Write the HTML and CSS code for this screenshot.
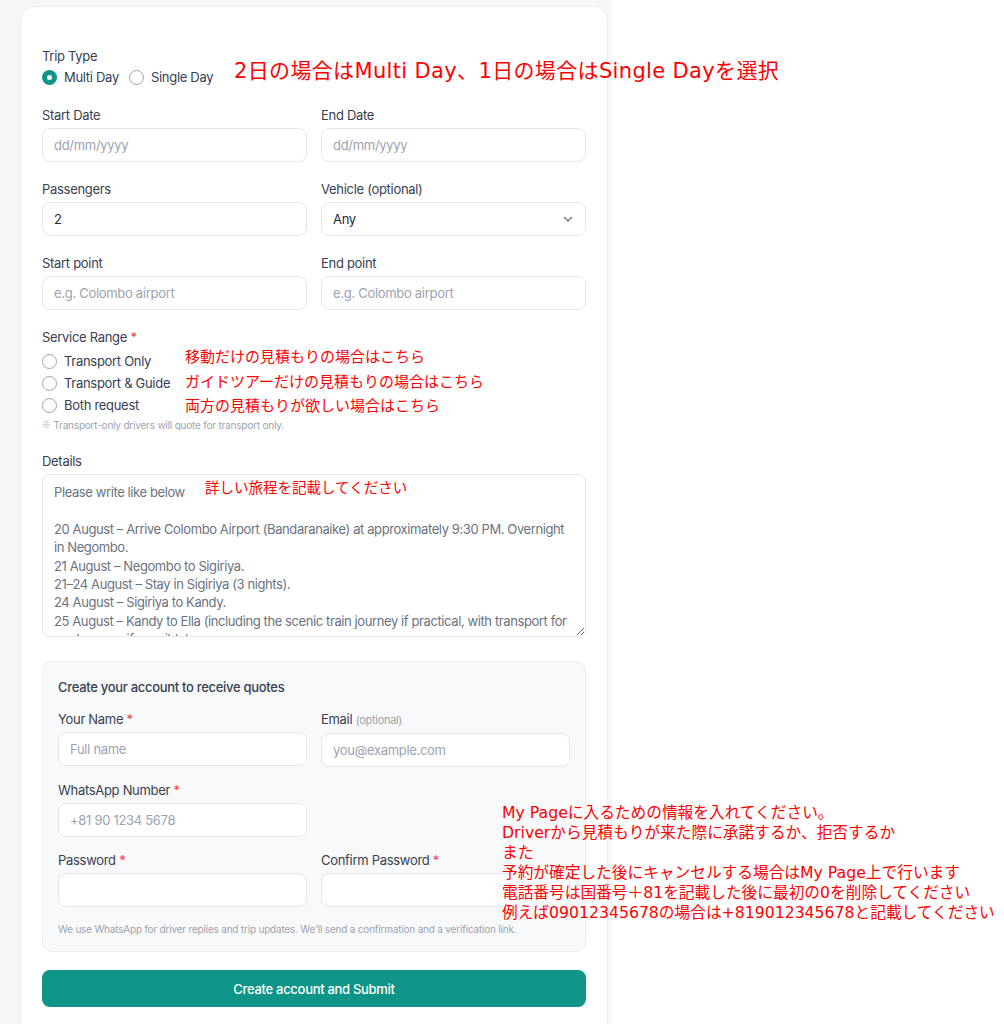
FILE: index.html
```html
<!DOCTYPE html>
<html lang="ja">
<head>
<meta charset="utf-8">
<title>Trip request</title>
<link rel="stylesheet" href="styles.css">
</head>
<body>
<div class="root">
  <div class="page">
    <form class="card">
      <div class="field">
        <div class="label flush">Trip Type</div>
        <div class="radio-inline">
          <label class="radio"><span class="dot checked"></span>Multi Day</label>
          <label class="radio"><span class="dot"></span>Single Day</label>
        </div>
      </div>

      <div class="grid2">
        <div class="field">
          <div class="label">Start Date</div>
          <div class="input placeholder">dd/mm/yyyy</div>
        </div>
        <div class="field">
          <div class="label">End Date</div>
          <div class="input placeholder">dd/mm/yyyy</div>
        </div>
      </div>

      <div class="grid2">
        <div class="field">
          <div class="label">Passengers</div>
          <div class="input">2</div>
        </div>
        <div class="field">
          <div class="label">Vehicle (optional)</div>
          <div class="input select">
            <span>Any</span>
            <svg class="chev" width="12" height="12" viewBox="0 0 12 12"><path d="M2.5 4.5 6 8l3.5-3.5" fill="none" stroke="#6b7280" stroke-width="1.3" stroke-linecap="round" stroke-linejoin="round"/></svg>
          </div>
        </div>
      </div>

      <div class="grid2">
        <div class="field">
          <div class="label">Start point</div>
          <div class="input placeholder">e.g. Colombo airport</div>
        </div>
        <div class="field">
          <div class="label">End point</div>
          <div class="input placeholder">e.g. Colombo airport</div>
        </div>
      </div>

      <div class="field">
        <div class="label flush">Service Range <span class="req">*</span></div>
        <div class="radio-stack">
          <label class="radio"><span class="dot"></span>Transport Only</label>
          <label class="radio"><span class="dot"></span>Transport &amp; Guide</label>
          <label class="radio"><span class="dot"></span>Both request</label>
        </div>
        <div class="hint"><span class="kome">※</span> Transport-only drivers will quote for transport only.</div>
      </div>

      <div class="field details">
        <div class="label">Details</div>
        <textarea class="textarea" placeholder="Please write like below&#10;&#10;20 August – Arrive Colombo Airport (Bandaranaike) at approximately 9:30 PM. Overnight in Negombo.&#10;21 August – Negombo to Sigiriya.&#10;21–24 August – Stay in Sigiriya (3 nights).&#10;24 August – Sigiriya to Kandy.&#10;25 August – Kandy to Ella (including the scenic train journey if practical, with transport for our luggage if possible).&#10;26 August – Ella to Yala.&#10;27 August – Yala safari, then to Galle."></textarea>
      </div>

      <div class="account">
        <div class="account-title">Create your account to receive quotes</div>
        <div class="grid2 tight">
          <div class="field">
            <div class="label">Your Name <span class="req">*</span></div>
            <div class="input placeholder">Full name</div>
          </div>
          <div class="field">
            <div class="label">Email <span class="opt">(optional)</span></div>
            <div class="input placeholder">you@example.com</div>
          </div>
        </div>
        <div class="grid2 tight">
          <div class="field">
            <div class="label">WhatsApp Number <span class="req">*</span></div>
            <div class="input placeholder">+81 90 1234 5678</div>
          </div>
        </div>
        <div class="grid2 tight">
          <div class="field">
            <div class="label">Password <span class="req">*</span></div>
            <div class="input"></div>
          </div>
          <div class="field">
            <div class="label">Confirm Password <span class="req">*</span></div>
            <div class="input"></div>
          </div>
        </div>
        <div class="hint">We use WhatsApp for driver replies and trip updates. We'll send a confirmation and a verification link.</div>
      </div>

      <button type="button" class="submit">Create account and Submit</button>
    </form>
  </div>

  <div class="note note-top">2日の場合はMulti Day、1日の場合はSingle Dayを選択</div>
  <div class="note note-svc">移動だけの見積もりの場合はこちら<br>ガイドツアーだけの見積もりの場合はこちら<br>両方の見積もりが欲しい場合はこちら</div>
  <div class="note note-details">詳しい旅程を記載してください</div>
  <div class="note note-account">My Pageに入るための情報を入れてください。<br>Driverから見積もりが来た際に承諾するか、拒否するか<br>また<br>予約が確定した後にキャンセルする場合はMy Page上で行います<br>電話番号は国番号＋81を記載した後に最初の0を削除してください<br>例えば09012345678の場合は+819012345678と記載してください</div>
</div>
</body>
</html>
```

FILE: styles.css
```css
* { box-sizing: border-box; }

html, body {
  margin: 0;
  padding: 0;
  background: #ffffff;
}

body {
  font-family: Inter, "Noto Sans CJK JP", sans-serif;
  font-size: 13px;
  letter-spacing: -0.3px;
  color: #374151;
}

.root {
  position: relative;
  width: 1004px;
  height: 1024px;
  overflow: hidden;
}

.page {
  width: 612px;
  min-height: 1024px;
  background: #f5f6f8;
  padding: 6px 4px 0 20px;
}

.card {
  background: #ffffff;
  border: 1px solid #eceef1;
  border-radius: 14px;
  padding: 40px 21px 24px;
  display: flex;
  flex-direction: column;
  gap: 18px;
  min-height: 1040px;
}

.grid2 {
  display: grid;
  grid-template-columns: 1fr 1fr;
  column-gap: 14px;
}

.field {
  display: flex;
  flex-direction: column;
}

.label {
  font-size: 13px;
  line-height: 18px;
  font-weight: 400;
  color: #374151;
  margin-bottom: 4px;
}

.label.flush { margin-bottom: 0; }

.req { color: #ef4444; }
.opt { color: #9ca3af; font-size: 11px; font-weight: 400; }

.input {
  height: 34px;
  border: 1px solid #e5e7eb;
  border-radius: 8px;
  background: #ffffff;
  padding: 0 11px;
  display: flex;
  align-items: center;
  font-size: 13px;
  color: #1f2937;
}

.input.placeholder { color: #9ca3af; }

.select {
  justify-content: space-between;
  padding-right: 11px;
}

.chev { display: block; }

.radio-inline {
  display: flex;
  gap: 10px;
  height: 22px;
  margin-top: 1px;
  align-items: center;
}

.radio-stack {
  display: flex;
  flex-direction: column;
  margin-top: 4px;
}

.radio-stack .radio { height: 22px; }

.radio {
  display: flex;
  align-items: center;
  gap: 7px;
  font-size: 13px;
  color: #374151;
}

.dot {
  width: 15px;
  height: 15px;
  border-radius: 50%;
  border: 1px solid #9ca3af;
  background: #fff;
  flex: none;
  position: relative;
}

.dot.checked {
  border: none;
  background: #0f9488;
}

.dot.checked::after {
  content: "";
  position: absolute;
  left: 5px;
  top: 5px;
  width: 5px;
  height: 5px;
  border-radius: 50%;
  background: #fff;
}

.hint {
  font-size: 10px;
  line-height: 14px;
  height: 14px;
  color: #9ca3af;
  margin-top: 2px;
  letter-spacing: -0.2px;
}

.kome {
  font-family: "Noto Sans CJK JP", sans-serif;
  font-size: 9px;
  line-height: 1;
  vertical-align: 1px;
}

.details { margin-top: 2px; }

.textarea {
  height: 163px;
  border: 1px solid #e5e7eb;
  border-radius: 8px;
  padding: 8px 11px;
  font-family: inherit;
  font-size: 13px;
  letter-spacing: -0.4px;
  line-height: 18.4px;
  color: #374151;
  resize: vertical;
  overflow: hidden;
  outline: none;
}

.textarea::placeholder { color: #6b7280; opacity: 1; }

.account {
  margin-top: 6px;
  background: #f8f9fb;
  border: 1px solid #eceef1;
  border-radius: 10px;
  padding: 15px 15px 15px;
  display: flex;
  flex-direction: column;
  gap: 14px;
}

.account-title {
  font-size: 13px;
  line-height: 20px;
  font-weight: 500;
  color: #374151;
  margin-bottom: -1px;
}

.account .hint { margin-top: 1px; }

.submit {
  height: 37px;
  border: none;
  border-radius: 8px;
  background: #0f9488;
  color: #ffffff;
  font-family: inherit;
  font-size: 13px;
  letter-spacing: -0.3px;
  font-weight: 500;
  cursor: pointer;
}

.note {
  position: absolute;
  color: #ff0000;
  font-family: "DejaVu Sans", "Noto Sans CJK JP", sans-serif;
  letter-spacing: 0;
  white-space: nowrap;
}

.note-top {
  left: 234px;
  top: 57px;
  font-size: 21px;
  line-height: 28px;
  letter-spacing: 0.35px;
}

.note-svc {
  left: 185px;
  top: 345px;
  font-size: 15px;
  line-height: 24.5px;
}

.note-details {
  left: 205px;
  top: 477px;
  font-size: 14.5px;
  line-height: 22px;
}

.note-account {
  left: 502px;
  top: 803px;
  font-size: 15.7px;
  line-height: 20px;
}
```
